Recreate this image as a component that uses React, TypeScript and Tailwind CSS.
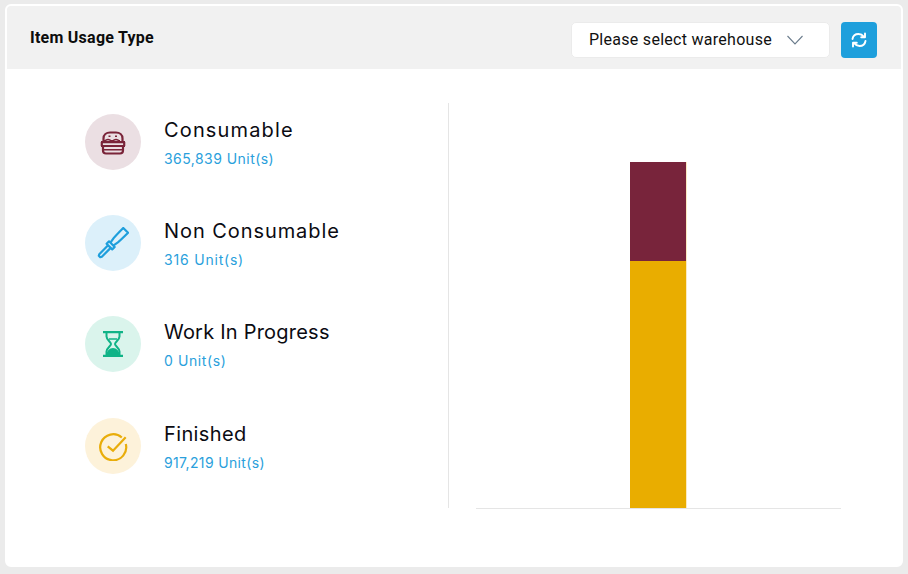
import React from "react";

const Burger = () => (
  <svg width="26" height="24" viewBox="0 0 26 24" fill="none" stroke="#7a2439" strokeWidth="2.200" className="mt-px">
    <path d="M3.500 10.500V7.500C3.500 3.800 6.500 1.500 10 1.500h6c3.500 0 6.500 2.300 6.500 6v3" />
    <path d="M1 11.200h24M1 15h24" />
    <path d="M1.800 11v4M24.200 11v4" />
    <path d="M3 15v4.500c0 1.800 1.200 3 3 3h14c1.800 0 3-1.200 3-3V15" />
    <path d="M3 18.800h20" strokeWidth="1.600" />
    <path d="M4 9.800c2 0 2-1.300 4-1.300s2 1.300 4 1.300 2-1.300 4-1.300 2 1.300 4 1.300" strokeWidth="1.600" />
    <path d="M8.500 5.200h2M15 5.200h2" strokeWidth="1.600" />
  </svg>
);

const Dropper = () => (
  <svg width="32" height="32" viewBox="0 0 32 32" fill="none" stroke="#1f9fdc" strokeWidth="2.200" strokeLinejoin="round">
    <g transform="translate(2.500 29.500) rotate(-45)">
      <path d="M14 -1.800H1.500L0 -1V1l1.500 .8H14" />
      <path d="M14 -4h3.500V4H14z" />
      <path d="M17.500 -2 23 -3c4 -.4 8 -.4 14 -.4V3.400c-6 0 -10 0 -14 -.4L17.500 2" />
    </g>
  </svg>
);

const Hourglass = () => (
  <svg width="20" height="26" viewBox="0 0 20 26" fill="none" stroke="#10b387" strokeWidth="2">
    <path d="M0 1.200h20M0 24.800h20" strokeWidth="2.200" />
    <path d="M3.500 2v3.500c0 3.500 4.500 5.500 4.500 7.500s-4.500 4-4.500 7.500V24M16.500 2v3.500c0 3.500-4.500 5.500-4.500 7.500s4.500 4 4.500 7.500V24" />
    <path d="M4.500 24c0-3.500 2.500-6 5.500-6s5.500 2.500 5.500 6z" fill="#10b387" />
    <path d="M6 8h8" strokeWidth="1.500" />
  </svg>
);

const Check = () => (
  <svg width="30" height="30" viewBox="0 0 30 30" fill="none" stroke="#e9ad0a" strokeWidth="2.200">
    <path d="M23.800 6.500A13 13 0 1 0 27.800 13" />
    <path d="m9.700 15.300 5.300 4.400L27.700 6.300" />
  </svg>
);

const Refresh = () => (
  <svg width="16" height="16" viewBox="0 0 16 16" fill="none" stroke="#fff" strokeWidth="1.900" strokeLinecap="round" strokeLinejoin="round">
    <path d="M1.500 7C2 4 4.500 2 7.500 2c2.300 0 4 1 5.500 2.800" />
    <path d="M14 1.500v3.800h-3.800" />
    <path d="M14.500 9c-.5 3-3 5-6 5-2.300 0-4-1-5.500-2.800" />
    <path d="M2 14.500v-3.800h3.800" />
  </svg>
);

const items = [
  { name: "Consumable", units: "365,839 Unit(s)", bg: "bg-[#ebdfe3]", icon: <Burger />, mt: "", nameTrack: "tracking-[1.15px]", unitTrack: "tracking-[0.45px]" },
  { name: "Non Consumable", units: "316 Unit(s)", bg: "bg-[#dcf0fa]", icon: <Dropper />, mt: "mt-[45px]", nameTrack: "tracking-[0.93px]", unitTrack: "tracking-[0.8px]" },
  { name: "Work In Progress", units: "0 Unit(s)", bg: "bg-[#daf4ec]", icon: <Hourglass />, mt: "mt-[45px]", nameTrack: "tracking-[0.22px]", unitTrack: "tracking-[0.6px]" },
  { name: "Finished", units: "917,219 Unit(s)", bg: "bg-[#fdf2da]", icon: <Check />, mt: "mt-[46px]", nameTrack: "tracking-[0.38px]", unitTrack: "tracking-[0.35px]" },
];

export default function App() {
  return (
    <div className="w-[908px] h-[574px] bg-[#ebebeb] px-[5px] pt-[4px] font-['Roboto',sans-serif] overflow-hidden">
      <div className="w-[898px] h-[563px] bg-white border-2 border-white rounded-[6px] overflow-hidden">
        <div className="h-[63px] bg-[#f1f1f1] flex items-center pl-[23px] pr-[24px]">
          <h1 className="text-[16px] font-bold text-[#0c0c0c] leading-none tracking-[0.25px]">Item Usage Type</h1>
          <div className="ml-auto flex items-center gap-[11px] mt-[4px]">
            <div className="w-[259px] h-[36px] bg-white border border-[#ebebeb] rounded-[5px] flex items-center pl-[17px] text-[16px] text-[#111] tracking-[0.28px]">
              <span>Please select warehouse</span>
              <svg className="ml-[15px]" width="16" height="10" viewBox="0 0 16 10" fill="none" stroke="#6b7c8c" strokeWidth="1.100">
                <path d="M.5 1 8 9l7.500-8" />
              </svg>
            </div>
            <button className="w-[36px] h-[36px] bg-[#1e9fdc] rounded-[4px] flex items-center justify-center">
              <Refresh />
            </button>
          </div>
        </div>
        <div className="flex pt-[34px]">
          <div className="w-[442px] h-[405px] border-r border-[#e5e5e5] pl-[78px] pt-[11px]">
            {items.map((it) => (
              <div key={it.name} className={`flex items-center gap-[23px] ${it.mt}`}>
                <div className={`w-[56px] h-[56px] rounded-full flex items-center justify-center ${it.bg}`}>{it.icon}</div>
                <div className="font-['Inter',sans-serif]">
                  <div className={`text-[20px] leading-[28px] text-[#0b0b12] ${it.nameTrack}`}>{it.name}</div>
                  <div className={`text-[14px] leading-[20px] mt-[5px] text-[#2a9fdc] ${it.unitTrack}`}>{it.units}</div>
                </div>
              </div>
            ))}
          </div>
          <div className="ml-[27px] w-[365px] h-[406px] border-b border-[#e5e5e5] flex items-end justify-center">
            <div className="w-[57px] flex flex-col border-r border-[#fbeac0]">
              <div className="h-[99px] bg-[#78243b]" />
              <div className="h-[247px] bg-[#e9ad00]" />
            </div>
          </div>
        </div>
      </div>
    </div>
  );
}
